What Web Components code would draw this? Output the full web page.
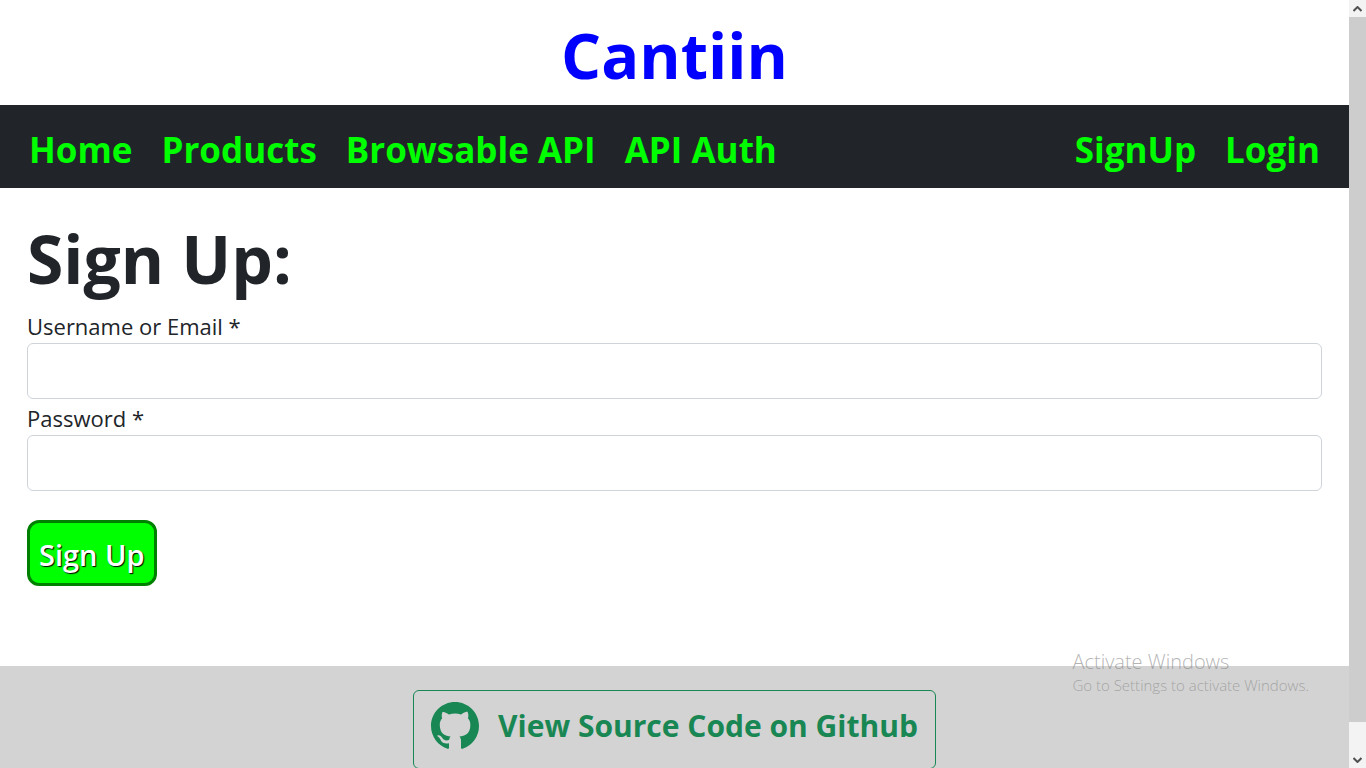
<!DOCTYPE html>
<html lang="en">
<head>
<meta charset="utf-8">
<meta name="viewport" content="width=device-width, initial-scale=1">
<title>Cantiin</title>
<style>
html, body { margin: 0; height: 100%; }
body { font-family: "Open Sans", "Noto Sans", sans-serif; color: #212529; background: #fff; overflow: hidden; }
</style>
</head>
<body>
<cantiin-app></cantiin-app>
<script>
const define = (name, markup, setup) => {
  const template = document.createElement('template');
  template.innerHTML = markup;
  customElements.define(name, class extends HTMLElement {
    constructor() {
      super();
      this.attachShadow({ mode: 'open' }).append(template.content.cloneNode(true));
    }
    connectedCallback() { if (setup) setup(this, this.shadowRoot); }
  });
};

define('site-title', `
<style>
:host { display: block; padding: 10px 0 6px; text-align: center; }
h1 { margin: 0; font-size: 63px; line-height: 89px; font-weight: 700; color: #00f; }
</style>
<h1><slot></slot></h1>`);

define('nav-link', `
<style>
:host { display: block; }
a { color: #0f0; font-size: 35px; line-height: 48px; font-weight: 700; text-decoration: none; white-space: nowrap; }
</style>
<a><slot></slot></a>`, (host, root) => {
  root.querySelector('a').href = host.getAttribute('to');
});

define('nav-bar', `
<style>
:host { display: block; background: #212529; }
nav { display: flex; justify-content: space-between; padding: 21px 29px 14px; }
div { display: flex; gap: 29px; }
</style>
<nav><div><slot></slot></div><div><slot name="account"></slot></div></nav>`);

define('form-field', `
<style>
:host { display: block; }
label { display: block; padding-top: 2px; font-size: 22px; line-height: 34px; }
input { display: block; box-sizing: border-box; width: 100%; height: 56px; margin: 0; padding: 8px 16px;
  border: 1px solid #ced4da; border-radius: 6px; background: #fff; color: inherit; font: inherit; font-size: 22px; outline: 0; }
</style>
<label for="box"></label><input id="box">`, (host, root) => {
  root.querySelector('label').textContent = host.getAttribute('label');
  root.querySelector('input').type = host.getAttribute('type');
});

define('signup-form', `
<style>
:host { display: block; padding: 27px 27px 80px; }
h2 { margin: 0 0 6px; font-size: 66px; line-height: 86px; font-weight: 700; }
button { display: block; height: 66px; margin: 29px 0 0; padding: 2px 9px 0; border: 3px solid green; border-radius: 12px;
  background: #0f0; color: #fff; font: inherit; font-size: 29px; font-weight: 600; text-shadow: 1px 1px 1px #000; white-space: nowrap; }
</style>
<h2>Sign Up:</h2>
<form>
<form-field label="Username or Email *" type="text"></form-field>
<form-field label="Password *" type="password"></form-field>
<button type="button">Sign Up</button>
</form>`);

define('site-footer', `
<style>
:host { display: flex; justify-content: center; padding: 24px 0; background: #d3d3d3; }
a { display: flex; align-items: center; gap: 19px; box-sizing: border-box; height: 79px; padding: 0 17px 8px; border: 1px solid #198754;
  border-radius: 6px; color: #198754; font-size: 30px; line-height: 40px; font-weight: 700; text-decoration: none; white-space: nowrap; }
svg { display: block; width: 48px; height: 48px; }
</style>
<a href="#source"><svg viewBox="0 0 16 16" fill="currentColor" aria-hidden="true"><path d="M8 0C3.58 0 0 3.58 0 8c0 3.54 2.29 6.53 5.47 7.59.4.07.55-.17.55-.38 0-.19-.01-.82-.01-1.49-2.01.37-2.53-.49-2.69-.94-.09-.23-.48-.94-.82-1.13-.28-.15-.68-.52-.01-.53.63-.01 1.08.58 1.23.82.72 1.21 1.87.87 2.33.66.07-.52.28-.87.51-1.07-1.78-.2-3.64-.89-3.64-3.95 0-.87.31-1.59.82-2.15-.08-.2-.36-1.02.08-2.12 0 0 .67-.21 2.2.82.64-.18 1.32-.27 2-.27s1.36.09 2 .27c1.53-1.04 2.2-.82 2.2-.82.44 1.1.16 1.92.08 2.12.51.56.82 1.27.82 2.15 0 3.07-1.87 3.75-3.65 3.95.29.25.54.73.54 1.48 0 1.07-.01 1.93-.01 2.2 0 .21.15.46.55.38A8.01 8.01 0 0 0 16 8c0-4.42-3.58-8-8-8z"/></svg><span>View Source Code on Github</span></a>`);

define('scroll-rail', `
<style>
:host { display: flex; flex-direction: column; background: #f3f3f3; }
i { flex: none; height: 17px; display: grid; place-items: center; }
b { flex: 705; background: #cdcdcd; }
u { flex: 29; }
svg { width: 9px; height: 6px; fill: none; stroke: #505050; stroke-width: 2; }
</style>
<i><svg viewBox="0 0 9 6"><path d="M.5 5l4-4 4 4"/></svg></i><b></b><u></u><i><svg viewBox="0 0 9 6"><path d="M.5 1l4 4 4-4"/></svg></i>`);

define('activation-note', `
<style>
:host { position: absolute; right: 57px; bottom: 73px; color: rgba(130,130,130,.6); pointer-events: none; white-space: nowrap; font-weight: 300; }
p { margin: 0; font-size: 20px; line-height: 26px; }
p + p { font-size: 15px; line-height: 20px; }
</style>
<p>Activate Windows</p><p>Go to Settings to activate Windows.</p>`);

define('cantiin-app', `
<style>
:host { display: grid; grid-template-columns: minmax(0, 1fr) 17px; height: 100vh; position: relative; overflow: hidden; }
main { overflow: hidden; }
</style>
<main>
<site-title>Cantiin</site-title>
<nav-bar>
<nav-link to="#home">Home</nav-link><nav-link to="#products">Products</nav-link><nav-link to="#browse">Browsable API</nav-link><nav-link to="#auth">API Auth</nav-link>
<nav-link slot="account" to="#signup">SignUp</nav-link><nav-link slot="account" to="#login">Login</nav-link>
</nav-bar>
<signup-form></signup-form>
<site-footer></site-footer>
</main>
<scroll-rail></scroll-rail>
<activation-note></activation-note>`);
</script>
</body>
</html>
